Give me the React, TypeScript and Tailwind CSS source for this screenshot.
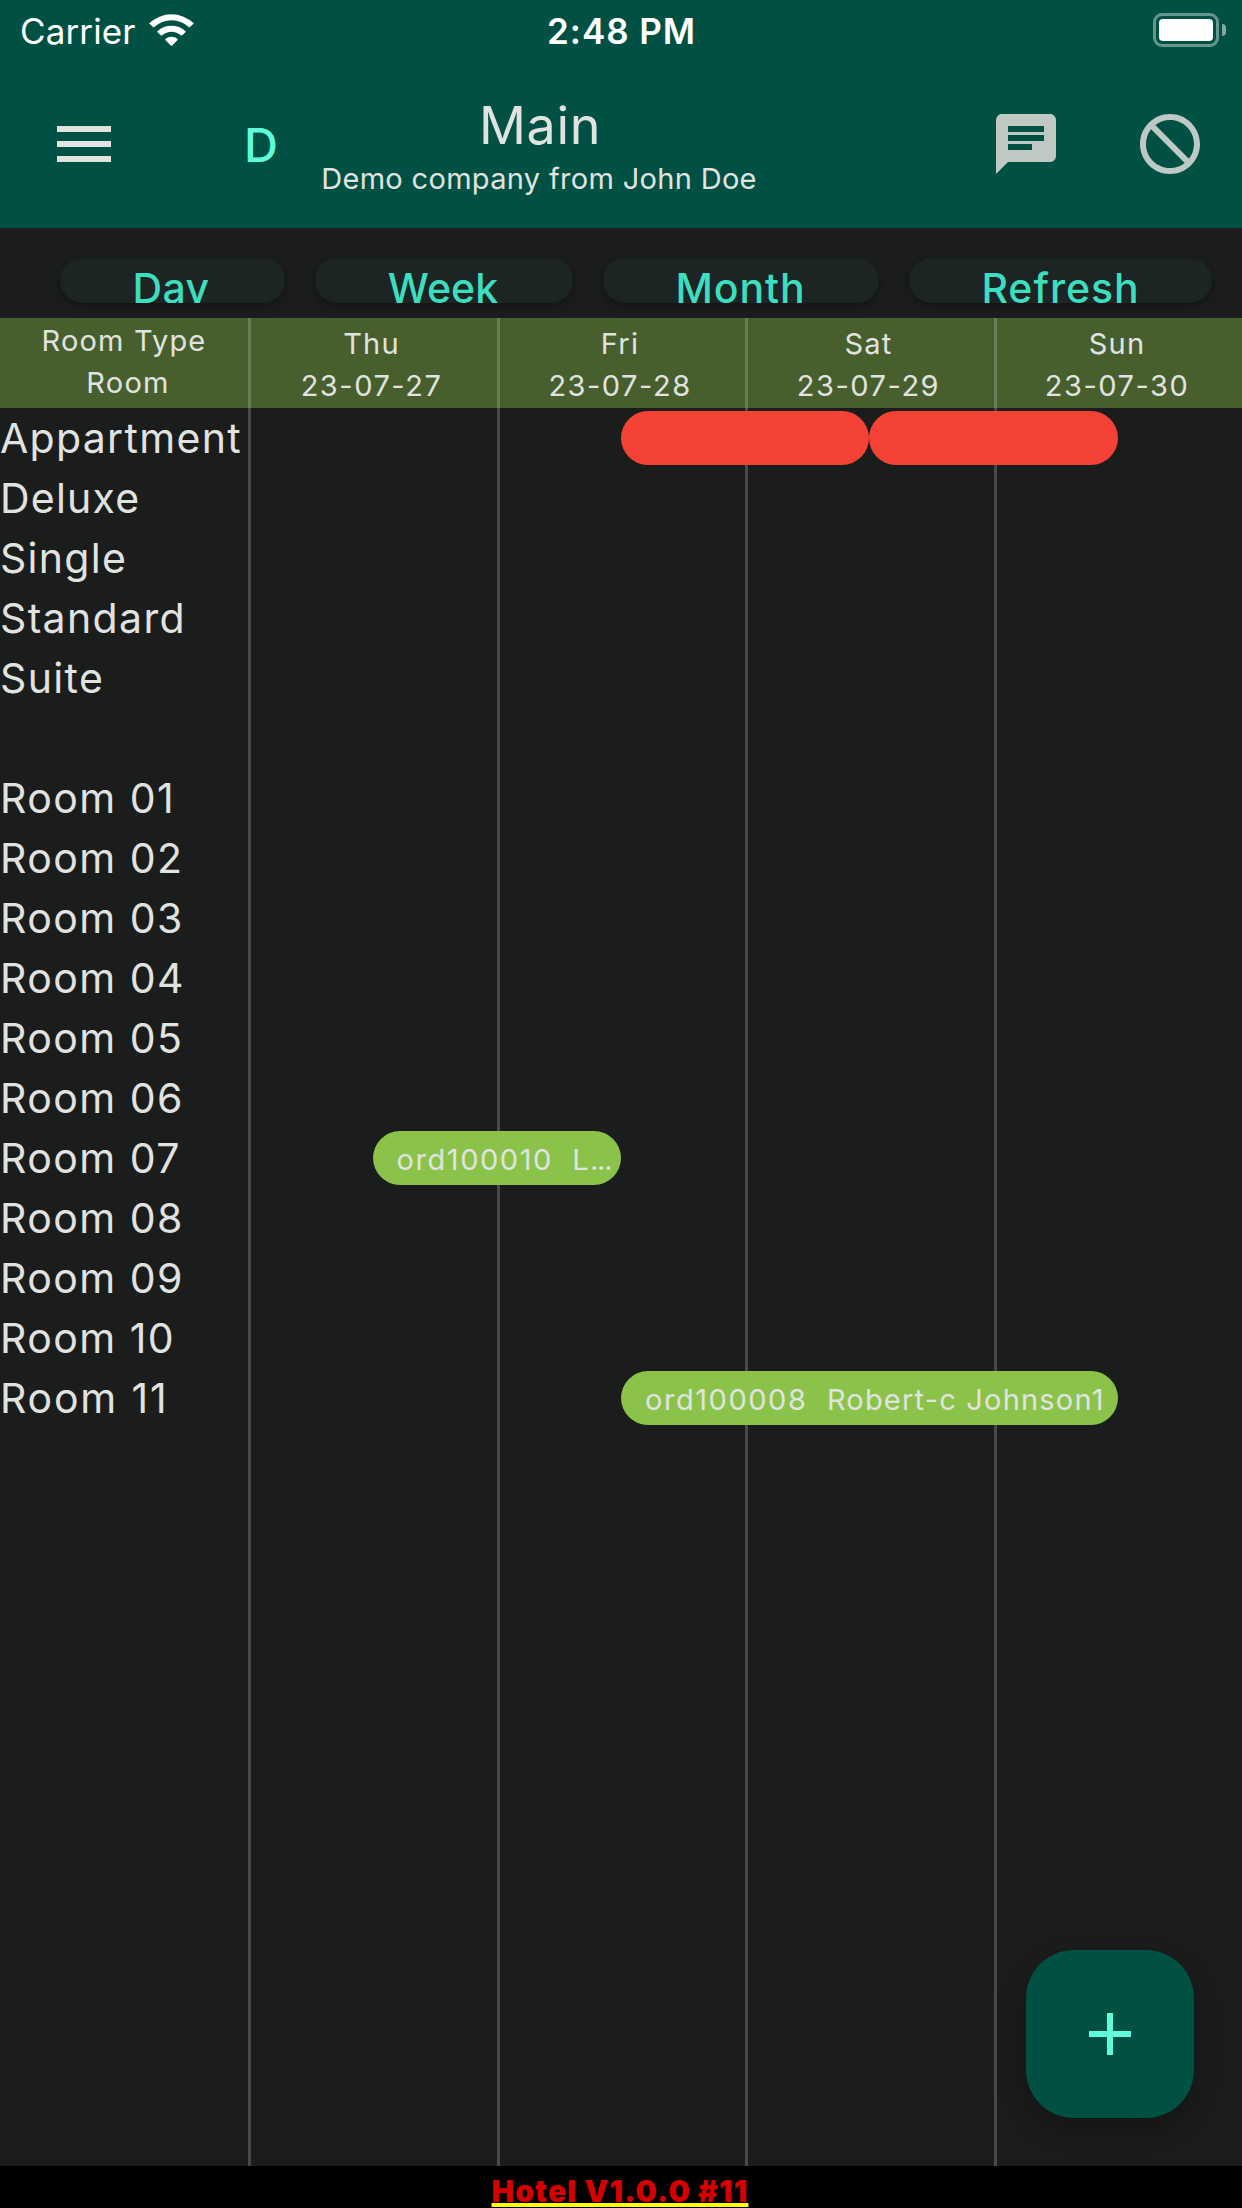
type Bar = { left: number; width: number; tone: "red" | "green"; order?: string; guest?: string; cut?: boolean };
type Row = { label: string; tracking?: string; bars?: Bar[] };

const rows: Row[] = [
  {
    label: "Appartment",
    tracking: "tracking-[1.3px]",
    bars: [
      { left: 621, width: 248.4, tone: "red" },
      { left: 869.4, width: 248.4, tone: "red" },
    ],
  },
  { label: "Deluxe", tracking: "tracking-[1.2px]" },
  { label: "Single", tracking: "tracking-[1.3px]" },
  { label: "Standard", tracking: "tracking-[1.35px]" },
  { label: "Suite", tracking: "tracking-[1.35px]" },
  { label: "" },
  { label: "Room 01" },
  { label: "Room 02" },
  { label: "Room 03" },
  { label: "Room 04" },
  { label: "Room 05" },
  { label: "Room 06" },
  { label: "Room 07", bars: [{ left: 372.6, width: 248.4, tone: "green", order: "ord100010", guest: "L", cut: true }] },
  { label: "Room 08" },
  { label: "Room 09" },
  { label: "Room 10" },
  { label: "Room 11", tracking: "tracking-[1.8px]", bars: [{ left: 621, width: 496.8, tone: "green", order: "ord100008", guest: "Robert-c Johnson1" }] },
];

const days = [
  ["Thu", "23-07-27"],
  ["Fri", "23-07-28"],
  ["Sat", "23-07-29"],
  ["Sun", "23-07-30"],
];

const actions = [
  { label: "Day", style: "w-[225px] pr-[3px] tracking-[0.38px]" },
  { label: "Week", style: "w-[258px] pr-[2px] tracking-[0.1px]" },
  { label: "Month", style: "w-[276px] pr-[1px] tracking-[0.89px]" },
  { label: "Refresh", style: "w-[303px] tracking-[0.95px]" },
];

const columns = "grid grid-cols-[248px_249px_248px_249px_248px]";

function StatusBar() {
  return (
    <div className="flex h-[60px] items-start text-white">
      <div className="flex flex-1 pl-5">
        <span className="text-[35px] leading-[62px] tracking-[0.13px]">Carrier</span>
        <svg className="ml-[11.5px] mt-[11px] h-[37px] w-[49px]" viewBox="147.5 11 49 37" fill="white">
          <path d="M149.8 23.3 A32 32 0 0 1 194.2 23.3 Q194.9 23 194.3 23.6 L190.4 27.1 Q189.8 27.6 189.2 27.1 A25 25 0 0 0 154.8 27.1 Q154.2 27.6 153.6 27.1 L149.7 23.6 Q149.2 23 149.8 23.3 Z" />
          <path d="M158 31.2 A20.4 20.4 0 0 1 186 31.2 Q186.6 31.7 186 32.2 L182.4 35.4 Q181.8 35.8 181.2 35.3 A13.6 13.6 0 0 0 162.8 35.3 Q162.2 35.8 161.6 35.4 L158 32.2 Q157.4 31.7 158 31.2 Z" />
          <path d="M165.9 38.9 A9.4 9.4 0 0 1 178.1 38.9 Q178.7 39.5 178.1 40 L172.7 45.5 Q172 46.2 171.3 45.5 L165.9 40 Q165.3 39.5 165.9 38.9 Z" />
        </svg>
      </div>
      <span className="mr-[3px] text-[35px] font-semibold leading-[62px] tracking-[0.94px]">2:48 PM</span>
      <div className="flex flex-1 items-center justify-end pr-4 pt-[13px]">
        <div className="h-[34px] w-[66px] rounded-[9px] border-[3px] border-white/40 p-[3px]">
          <div className="h-full w-full rounded-[4px] bg-white" />
        </div>
        <div className="ml-[3px] h-3 w-1 rounded-r-full bg-white/50" />
      </div>
    </div>
  );
}

function AppBar() {
  return (
    <div className="flex h-[168px] items-center pl-12 pr-9 text-[#e1e3e0]">
      <svg className="size-[72px]" viewBox="0 0 24 24" fill="currentColor">
        <path d="M3 18h18v-2H3v2zm0-5h18v-2H3v2zm0-7v2h18V6H3z" />
      </svg>
      <span className="ml-[124px] w-[39px] pt-[2px] text-[47px] font-medium leading-[60px] text-[#5ffbdb]">D</span>
      <div className="ml-5 flex h-full w-[474px] flex-col items-center pt-[36px]">
        <h1 className="text-[52px] leading-[60px] tracking-[0.64px]">Main</h1>
        <p className="mt-[5px] whitespace-nowrap pr-[2px] text-[29px] leading-[36px] tracking-[0.32px]">Demo company from John Doe</p>
      </div>
      <svg className="ml-auto size-[72px] text-[#bfc9c4]" viewBox="0 0 24 24" fill="currentColor">
        <path d="M20 2H4c-1.1 0-1.99.9-1.99 2L2 22l4-4h14c1.1 0 2-.9 2-2V4c0-1.1-.9-2-2-2zM6 9h12v2H6V9zm8 5H6v-2h8v2zm4-6H6V6h12v2z" />
      </svg>
      <svg className="ml-[72px] size-[72px] text-[#bfc9c4]" viewBox="0 0 24 24" fill="currentColor">
        <path d="M12 2C6.48 2 2 6.48 2 12s4.48 10 10 10 10-4.48 10-10S17.52 2 12 2zM4 12c0-4.42 3.58-8 8-8 1.85 0 3.55.63 4.9 1.69L5.69 16.9C4.63 15.55 4 13.85 4 12zm8 8c-1.85 0-3.55-.63-4.9-1.69L18.31 7.1C19.37 8.45 20 10.15 20 12c0 4.42-3.58 8-8 8z" transform="matrix(-1 0 0 1 24 0)" />
      </svg>
    </div>
  );
}

function OrderBar({ bar, start }: { bar: Bar; start: number }) {
  return (
    <div
      className={`mt-[3px] h-[54px] shrink-0 overflow-hidden whitespace-pre rounded-full pl-[24px] text-[29px] leading-[57px] ${bar.tone === "red" ? "bg-[#f44336]" : "bg-[#8bc34a]"}`}
      style={{ marginLeft: bar.left - start, width: bar.width }}
    >
      {bar.order && (
        <>
          <span className="tracking-[1.55px]">{bar.order + "  "}</span>
          <span className="tracking-[1.2px]">{bar.guest}</span>
          {bar.cut && <span className="tracking-[-1.2px]">...</span>}
        </>
      )}
    </div>
  );
}

function ScheduleRow({ row }: { row: Row }) {
  return (
    <div className="flex h-[60px]">
      <span className={`w-[248px] shrink-0 whitespace-nowrap text-[41px] leading-[60px] ${row.tracking ?? "tracking-[1.45px]"}`}>{row.label}</span>
      {row.bars?.map((bar, i, all) => (
        <OrderBar key={bar.left} bar={bar} start={i === 0 ? 248 : all[i - 1].left + all[i - 1].width} />
      ))}
    </div>
  );
}

export default function App() {
  return (
    <div className="flex h-[2208px] w-[1242px] flex-col overflow-hidden bg-[#1b1d1c] font-['Inter','Liberation_Sans',sans-serif] text-[#e1e3e0]">
      <header className="h-[228px] shrink-0 bg-[#005143]">
        <StatusBar />
        <AppBar />
      </header>

      <nav className="flex h-[90px] shrink-0 gap-[30px] pl-[60px] pt-[30px]">
        {actions.map((a) => (
          <button
            key={a.label}
            className={`flex h-[45px] items-start justify-center overflow-hidden rounded-full bg-[#1c2524] text-[41px] font-medium leading-[60px] text-[#3cdebf] shadow-[0_3px_7px_rgba(0,0,0,0.3)] ${a.style}`}
          >
            {a.label}
          </button>
        ))}
      </nav>

      <main className="relative flex-1">
        <div className={`${columns} h-[90px] bg-[#475e2d] text-center text-[29px] leading-[42px]`}>
          <div className="pt-[2px]">
            <p className="tracking-[1.15px]">Room Type</p>
            <p className="pl-[8px] tracking-[1.3px]">Room</p>
          </div>
          {days.map(([day, date]) => (
            <div key={day} className="pr-[2px] pt-[5px]">
              <p className="tracking-[1.2px]">{day}</p>
              <p className="tracking-[1.52px]">{date}</p>
            </div>
          ))}
        </div>

        <div className={`${columns} pointer-events-none absolute inset-0`}>
          <div />
          {days.map(([day]) => (
            <div key={day} className="border-l-[3px] border-white/20" />
          ))}
        </div>

        <div className="relative">
          {rows.map((row, i) => (
            <ScheduleRow key={i} row={row} />
          ))}
        </div>

        <button aria-label="Add" className="absolute bottom-12 right-12 flex size-[168px] items-center justify-center rounded-[48px] bg-[#005143] text-[#5ffbdb] shadow-[0_12px_30px_rgba(0,0,0,0.3)]">
          <svg className="size-[72px]" viewBox="0 0 24 24" fill="currentColor">
            <path d="M19 13h-6v6h-2v-6H5v-2h6V5h2v6h6v2z" />
          </svg>
        </button>
      </main>

      <footer className="flex h-[42px] shrink-0 justify-center overflow-hidden bg-black pr-[2px]">
        <span className="text-[30px] font-black leading-[50px] tracking-[1.15px] text-[#d50000] underline decoration-[#ffff00] decoration-[4px] underline-offset-[1px] [text-decoration-skip-ink:none]">
          Hotel V1.0.0 #11
        </span>
      </footer>
    </div>
  );
}
